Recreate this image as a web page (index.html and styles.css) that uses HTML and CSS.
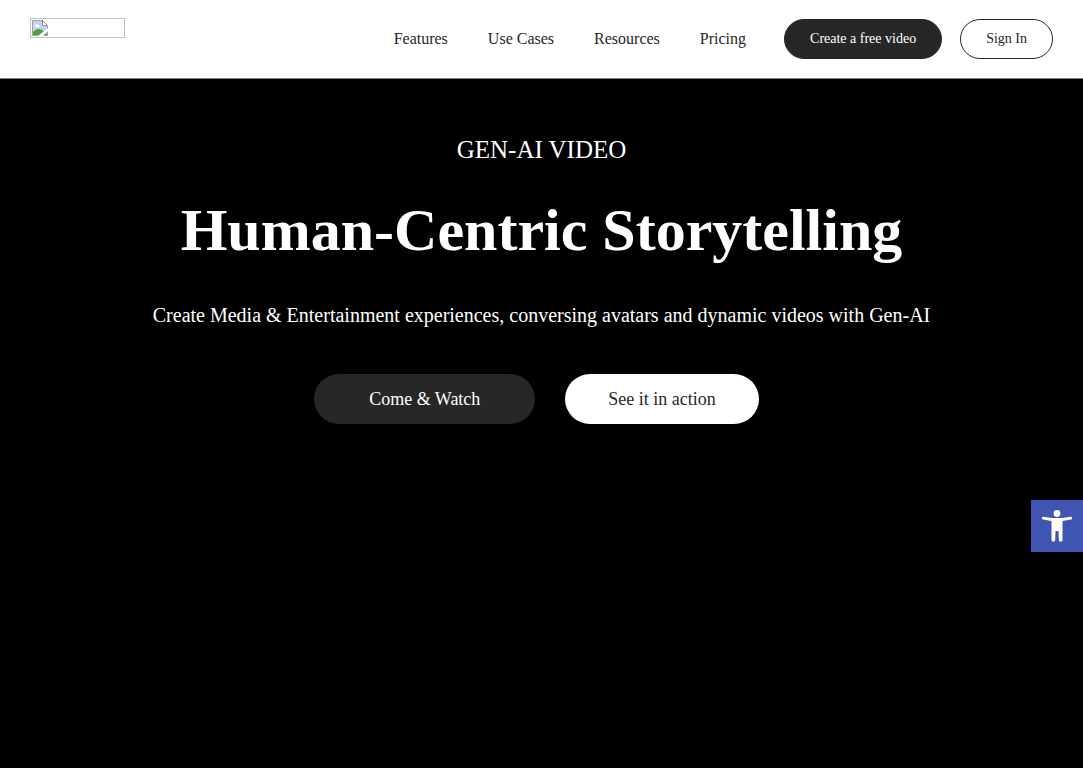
FILE: index.html
```html
<!DOCTYPE html>
<html lang="en">

<head>
  <meta charset="UTF-8">
  <meta name="viewport" content="width=device-width, initial-scale=1">
  <title>Gen-AI Video</title>
  <link rel="stylesheet" href="styles.css">
</head>

<body>
  <header class="header">
    <a href="#" class="logo" aria-label="Home">
      <svg width="16" height="16" viewBox="0 0 16 16">
        <path d="M.5.5h10l5 5v10H.5z" fill="#fff" stroke="#a0a0a0" />
        <path d="M1 1h9v5h5v9H1z" fill="#c3d3f5" />
        <path d="M3 6c0-2 3-2 3-1 2 0 2 2 1 2H4C3 7 3 6 3 6z" fill="#fff" />
        <path d="M1 14v-2c2-3 7-4 9-2l5 4v1H1z" fill="#4da338" />
        <path d="M10.500.5v5h5z" fill="#fff" stroke="#8a8a8a" />
        <path d="M6 16l10-8v3l-5 5z" fill="#fff" />
      </svg>
    </a>
    <nav class="nav">
      <a href="#">Features</a>
      <a href="#">Use Cases</a>
      <a href="#">Resources</a>
      <a href="#">Pricing</a>
    </nav>
    <div class="header-buttons">
      <button class="btn btn-dark">Create a free video</button>
      <button class="btn btn-outline">Sign In</button>
    </div>
  </header>

  <main class="hero">
    <p class="hero-label">GEN-AI VIDEO</p>
    <h1>Human-Centric Storytelling</h1>
    <p class="hero-text">Create Media &amp; Entertainment experiences, conversing avatars and dynamic videos with Gen-AI</p>
    <div class="hero-buttons">
      <button class="hero-btn watch">Come &amp; Watch</button>
      <button class="hero-btn action">See it in action</button>
    </div>
  </main>

  <button class="accessibility" aria-label="Accessibility tools">
    <svg width="32" height="34" viewBox="0 0 32 34" fill="#fff">
      <circle cx="16" cy="4.500" r="3.400" />
      <path d="M2.500 7.800C7 8.600 11 9 16 9s9-.4 13.500-1.200c1.900-.3 2.300 2.400.5 2.800-2.800.6-5.500 1-8.500 1.300V31c0 2.300-3.600 2.300-3.700 0l-.3-9h-3l-.3 9c-.1 2.300-3.700 2.300-3.700 0V11.900c-3-.3-5.700-.7-8.500-1.300-1.800-.4-1.400-3.100.5-2.800z" />
    </svg>
  </button>
</body>

</html>
```
FILE: styles.css
```css
* {
  margin: 0;
  padding: 0;
  box-sizing: border-box;
}

body {
  font-family: "Liberation Serif", "Times New Roman", serif;
  background: #000;
  color: #fff;
  min-height: 100vh;
}

button {
  font-family: inherit;
  cursor: pointer;
}

/* header */
.header {
  display: flex;
  align-items: center;
  padding: 18px 30px;
  background: #fff;
  border-bottom: 1px solid #808080;
}

.logo {
  display: flex;
  align-self: flex-start;
  width: 95px;
  height: 20px;
  padding: 1px;
  border: 1px solid #c0c0c0;
}

.nav {
  display: flex;
  gap: 40px;
  margin-left: auto;
}

.nav a {
  color: #272727;
  font-size: 16px;
  text-decoration: none;
}

.header-buttons {
  display: flex;
  gap: 18px;
  margin: 1px 0 1px 38px;
}

.btn {
  height: 40px;
  padding: 0 25px;
  border: 1px solid #272727;
  border-radius: 20px;
  font-size: 14px;
}

.btn-dark {
  background: #272727;
  color: #fff;
}

.btn-outline {
  background: #fff;
  color: #272727;
}

/* hero */
.hero {
  padding: 56px 20px;
  text-align: center;
}

.hero-label {
  font-size: 25px;
  line-height: 30px;
}

.hero h1 {
  margin-top: 30px;
  font-size: 60px;
  line-height: 70px;
}

.hero-text {
  margin-top: 38px;
  font-size: 20px;
  line-height: 24px;
}

.hero-buttons {
  display: flex;
  justify-content: center;
  gap: 30px;
  margin-top: 47px;
  padding-right: 10px;
}

.hero-btn {
  height: 50px;
  border: none;
  border-radius: 25px;
  font-size: 18px;
}

.watch {
  padding: 0 55px;
  background: #272727;
  color: #fff;
}

.action {
  padding: 0 43px;
  background: #fff;
  color: #272727;
}

/* accessibility toggle */
.accessibility {
  position: fixed;
  right: 0;
  top: 500px;
  display: flex;
  align-items: center;
  justify-content: center;
  width: 52px;
  height: 52px;
  border: none;
  background: #4054b2;
}
```
